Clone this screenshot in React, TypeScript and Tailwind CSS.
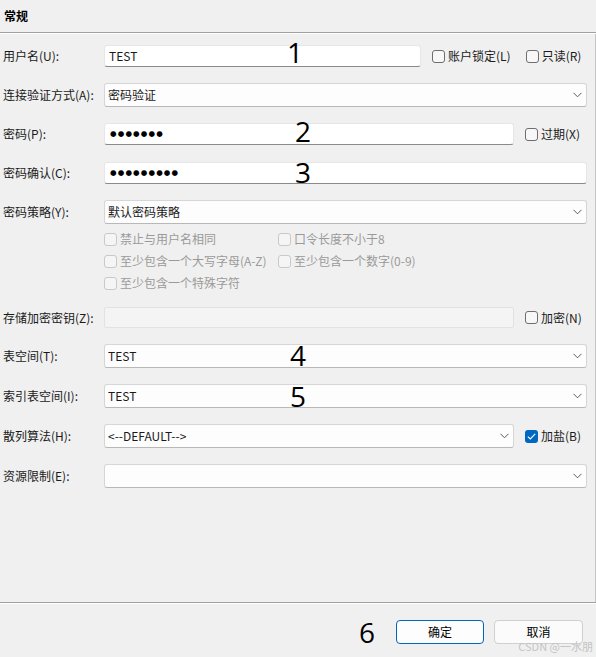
import type { ReactNode } from 'react'

const FONT = "font-['Noto_Sans_CJK_SC','Noto_Sans',sans-serif]"

function Chevron() {
  return (
    <svg width="9" height="6" viewBox="0 0 9 6" className="shrink-0">
      <path d="M0.5 0.8 L4.5 4.8 L8.5 0.8" fill="none" stroke="#5a5a5a" strokeWidth="1" />
    </svg>
  )
}

function Checkbox({ label, checked, disabled }: { label: string; checked?: boolean; disabled?: boolean }) {
  return (
    <div className="flex items-center gap-[3px]">
      {checked ? (
        <div className="w-[13px] h-[13px] rounded-[3px] bg-[#0067c0] flex items-center justify-center">
          <svg width="9" height="7" viewBox="0 0 9 7">
            <path d="M0.8 3.6 L3.3 6 L8.2 0.9" fill="none" stroke="#ffffff" strokeWidth="1.1" />
          </svg>
        </div>
      ) : (
        <div
          className={
            disabled
              ? 'w-[13px] h-[13px] rounded-[3px] border border-[#c9c9c9] bg-[#f5f5f5]'
              : 'w-[13px] h-[13px] rounded-[3px] border border-[#6e6e6e] bg-[#f7f7f7]'
          }
        />
      )}
      <span className={disabled ? 'text-[12px] text-[#9a9a9a]' : 'text-[12px] text-[#1a1a1a]'}>{label}</span>
    </div>
  )
}

function TextBox({ w, children, disabled }: { w: string; children?: ReactNode; disabled?: boolean }) {
  if (disabled) {
    return <div className={`${w} h-[21px] rounded-[2px] border border-[#e2e2e2] bg-[#f4f4f4]`} />
  }
  return (
    <div
      className={`${w} h-[22px] rounded-[3px] bg-white border border-[#e6e6e6] border-b-[#8a8a8a] flex items-center px-[4px] text-[12px] text-[#1a1a1a]`}
    >
      {children}
    </div>
  )
}

function Combo({ w, value }: { w: string; value?: string }) {
  return (
    <div
      className={`${w} h-[24px] rounded-[3px] bg-[#fdfdfd] border border-[#d6d6d6] border-b-[#b8b8b8] flex items-center justify-between pl-[3px] pr-[4px] text-[12px] text-[#1a1a1a]`}
    >
      <span>{value}</span>
      <Chevron />
    </div>
  )
}

function Dots({ n }: { n: number }) {
  return (
    <div className="flex items-center pl-[1px]">
      {Array.from({ length: n }).map((_, i) => (
        <span key={i} className="w-[7.7px] font-['DejaVu_Sans',sans-serif] text-[7.5px] leading-none text-black">
          ●
        </span>
      ))}
    </div>
  )
}

function Row({ label, mt, children }: { label: string; mt: string; children: ReactNode }) {
  return (
    <div className={`flex items-center pl-[3px] ${mt}`}>
      <div className="w-[101px] text-[12px] text-[#1a1a1a]">{label}</div>
      {children}
    </div>
  )
}

export default function App() {
  return (
    <div className={`relative w-[596px] h-[657px] bg-[#f0f0f0] overflow-hidden ${FONT}`}>
      {/* header */}
      <div className="h-[32px] flex items-center pl-[4px] text-[12px] font-bold text-black">常规</div>
      <div className="h-px bg-[#a0a0a0]" />
      <div className="h-px bg-white" />

      {/* form */}
      <div className="h-[568px] flex flex-col border-r border-[#c6c6c6]">
        <Row label="用户名(U):" mt="mt-[11px]">
          <TextBox w="w-[317px]">TEST</TextBox>
          <div className="ml-[11px]">
            <Checkbox label="账户锁定(L)" />
          </div>
          <div className="ml-[15px]">
            <Checkbox label="只读(R)" />
          </div>
        </Row>

        <Row label="连接验证方式(A):" mt="mt-[16px]">
          <Combo w="w-[483px]" value="密码验证" />
        </Row>

        <Row label="密码(P):" mt="mt-[16px]">
          <TextBox w="w-[410px]">
            <Dots n={7} />
          </TextBox>
          <div className="ml-[11px]">
            <Checkbox label="过期(X)" />
          </div>
        </Row>

        <Row label="密码确认(C):" mt="mt-[17px]">
          <TextBox w="w-[483px]">
            <Dots n={9} />
          </TextBox>
        </Row>

        <Row label="密码策略(Y):" mt="mt-[16px]">
          <Combo w="w-[483px]" value="默认密码策略" />
        </Row>

        <div className="mt-[4px] pl-[104px]">
          <div className="h-[22px] flex items-center">
            <div className="w-[174px]">
              <Checkbox label="禁止与用户名相同" disabled />
            </div>
            <Checkbox label="口令长度不小于8" disabled />
          </div>
          <div className="h-[22px] flex items-center">
            <div className="w-[174px]">
              <Checkbox label="至少包含一个大写字母(A-Z)" disabled />
            </div>
            <Checkbox label="至少包含一个数字(0-9)" disabled />
          </div>
          <div className="h-[22px] flex items-center">
            <Checkbox label="至少包含一个特殊字符" disabled />
          </div>
        </div>

        <Row label="存储加密密钥(Z):" mt="mt-[13px]">
          <TextBox w="w-[410px]" disabled />
          <div className="ml-[11px]">
            <Checkbox label="加密(N)" />
          </div>
        </Row>

        <Row label="表空间(T):" mt="mt-[16px]">
          <Combo w="w-[483px]" value="TEST" />
        </Row>

        <Row label="索引表空间(I):" mt="mt-[16px]">
          <Combo w="w-[483px]" value="TEST" />
        </Row>

        <Row label="散列算法(H):" mt="mt-[16px]">
          <Combo w="w-[410px]" value="<--DEFAULT-->" />
          <div className="ml-[11px]">
            <Checkbox label="加盐(B)" checked />
          </div>
        </Row>

        <Row label="资源限制(E):" mt="mt-[16px]">
          <Combo w="w-[483px]" />
        </Row>
      </div>

      {/* footer */}
      <div className="h-px bg-[#a0a0a0]" />
      <div className="h-px bg-white" />
      <div className="flex justify-end gap-[10px] pt-[16px] pr-[13px]">
        <button className="w-[88px] h-[24px] rounded-[4px] border border-[#0067c0] bg-[#fdfdfd] text-[12px] text-black">
          确定
        </button>
        <button className="w-[89px] h-[24px] rounded-[4px] border border-[#d0d0d0] bg-[#fbfbfb] text-[12px] text-black">
          取消
        </button>
      </div>

      {/* annotation numbers */}
      <div className="absolute inset-0 pointer-events-none font-['Open_Sans',sans-serif] text-[28px] leading-none text-black">
        <span className="absolute left-[287px] top-[38px] w-[16px] text-center">1</span>
        <span className="absolute left-[295px] top-[117px] w-[16px] text-center">2</span>
        <span className="absolute left-[295px] top-[158px] w-[16px] text-center">3</span>
        <span className="absolute left-[290px] top-[341px] w-[16px] text-center">4</span>
        <span className="absolute left-[290px] top-[382px] w-[16px] text-center">5</span>
        <span className="absolute left-[359px] top-[618px] w-[16px] text-center">6</span>
      </div>

      {/* watermark */}
      <div className="absolute right-[3px] top-[638px] text-[11px] text-[#c4c4c4]">CSDN @一水朋</div>
    </div>
  )
}
